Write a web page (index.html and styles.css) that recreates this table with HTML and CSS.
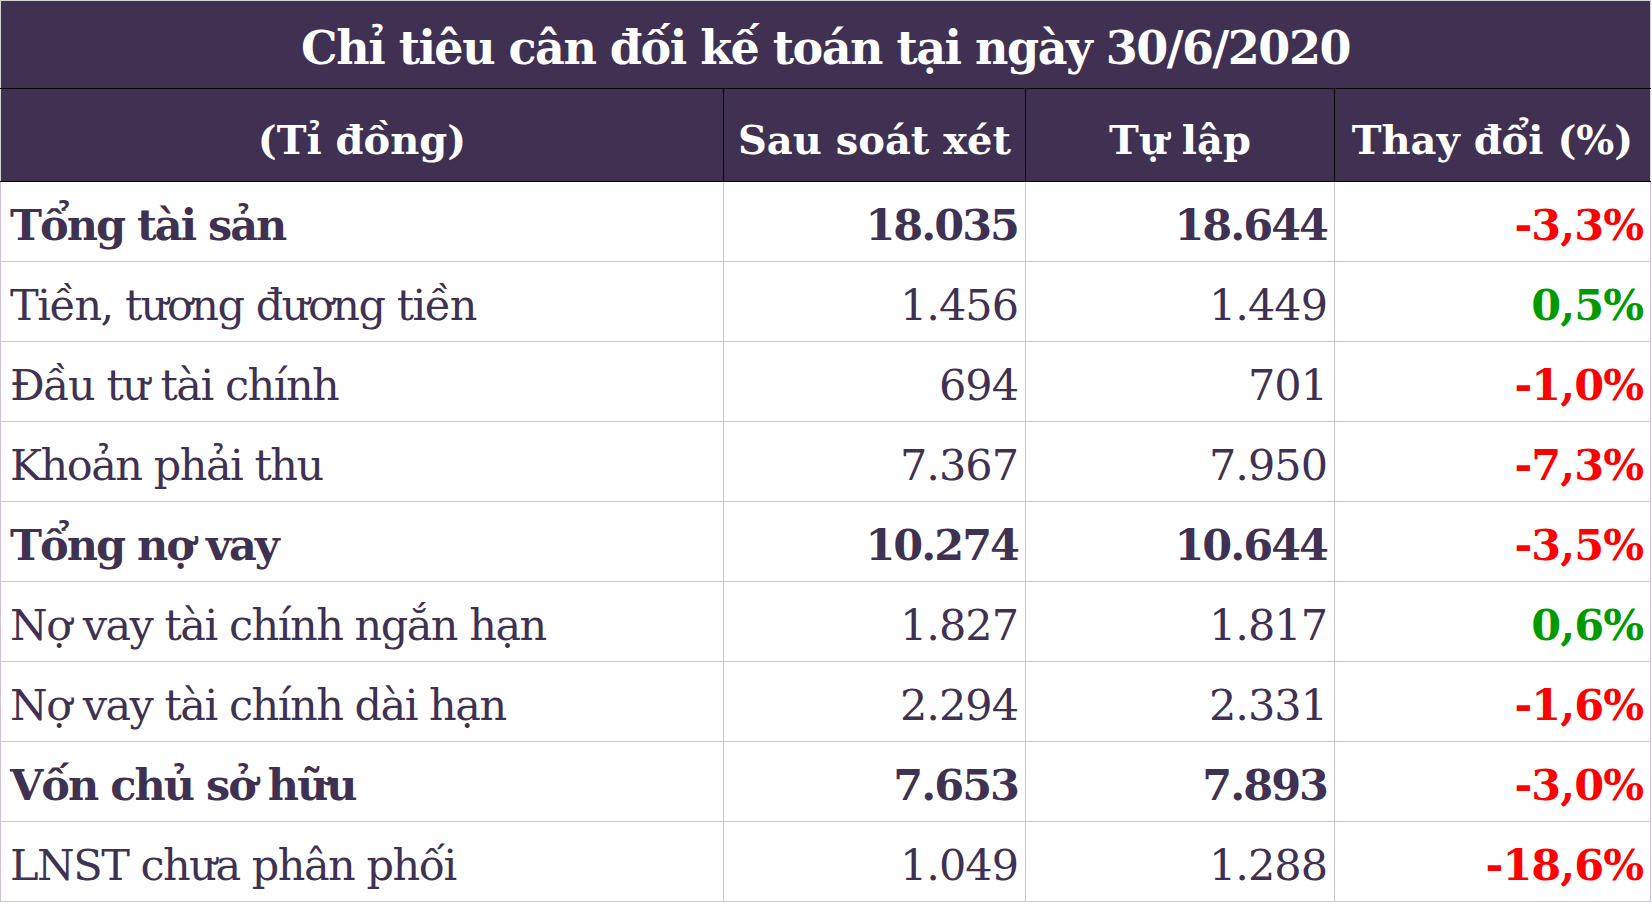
FILE: index.html
```html
<!DOCTYPE html>
<html lang="vi">
<head>
<meta charset="utf-8">
<title>Chỉ tiêu cân đối kế toán</title>
<link rel="stylesheet" href="styles.css">
</head>
<body>
<table class="sheet">
  <colgroup>
    <col class="c1"><col class="c2"><col class="c3"><col class="c4">
  </colgroup>
  <thead>
    <tr class="title-row"><th colspan="4">Chỉ tiêu cân đối kế toán tại ngày 30/6/2020</th></tr>
    <tr class="head-row">
      <th>(Tỉ đồng)</th>
      <th>Sau soát xét</th>
      <th>Tự lập</th>
      <th>Thay đổi (%)</th>
    </tr>
  </thead>
  <tbody>
    <tr class="bold"><td>Tổng tài sản</td><td>18.035</td><td>18.644</td><td class="neg">-3,3%</td></tr>
    <tr><td>Tiền, tương đương tiền</td><td>1.456</td><td>1.449</td><td class="pos">0,5%</td></tr>
    <tr><td>Đầu tư tài chính</td><td>694</td><td>701</td><td class="neg">-1,0%</td></tr>
    <tr><td>Khoản phải thu</td><td>7.367</td><td>7.950</td><td class="neg">-7,3%</td></tr>
    <tr class="bold"><td>Tổng nợ vay</td><td>10.274</td><td>10.644</td><td class="neg">-3,5%</td></tr>
    <tr><td>Nợ vay tài chính ngắn hạn</td><td>1.827</td><td>1.817</td><td class="pos">0,6%</td></tr>
    <tr><td>Nợ vay tài chính dài hạn</td><td>2.294</td><td>2.331</td><td class="neg">-1,6%</td></tr>
    <tr class="bold"><td>Vốn chủ sở hữu</td><td>7.653</td><td>7.893</td><td class="neg">-3,0%</td></tr>
    <tr><td>LNST chưa phân phối</td><td>1.049</td><td>1.288</td><td class="neg">-18,6%</td></tr>
  </tbody>
</table>
</body>
</html>
```

FILE: styles.css
```css
html, body {
  margin: 0;
  padding: 0;
  background: #ffffff;
}

.sheet {
  border-collapse: collapse;
  table-layout: fixed;
  width: 1650px;
  font-family: "DejaVu Serif", "Liberation Serif", serif;
  line-height: 1;
  color: #3f3151;
  border: 1px solid #d4d4d4;
}

.c1 { width: 723px; }
.c2 { width: 302px; }
.c3 { width: 309px; }
.c4 { width: 316px; }

.title-row th {
  height: 81px;
  padding: 6px 0 0 0;
  background: #403152;
  color: #ffffff;
  font-weight: bold;
  font-size: 46px;
  letter-spacing: -1.5px;
  text-align: center;
  vertical-align: middle;
  border-bottom: 1px solid #000000;
}

.head-row th {
  height: 83px;
  padding: 9px 0 0 0;
  background: #403152;
  color: #ffffff;
  font-weight: bold;
  font-size: 40px;
  text-align: center;
  vertical-align: middle;
  border: 1px solid #000000;
  border-top: none;
}

.head-row th:first-child { border-left: none; }
.head-row th:last-child { border-right: none; }

tbody td {
  height: 72px;
  padding: 7px 7px 0 9px;
  font-size: 43px;
  letter-spacing: -1px;
  text-align: right;
  vertical-align: middle;
  white-space: nowrap;
  border: 1px solid #ccc0da;
}

tbody td:first-child {
  text-align: left;
  letter-spacing: -1.5px;
}

tbody tr:first-child td { border-top: none; }

.bold td {
  font-weight: bold;
  letter-spacing: -2px;
}

.bold td:first-child { letter-spacing: -2px; }

tbody td.neg,
.bold td.neg {
  color: #ff0000;
  font-weight: bold;
  letter-spacing: -1px;
}

tbody td.pos {
  color: #009a00;
  font-weight: bold;
  letter-spacing: -1px;
}
```
